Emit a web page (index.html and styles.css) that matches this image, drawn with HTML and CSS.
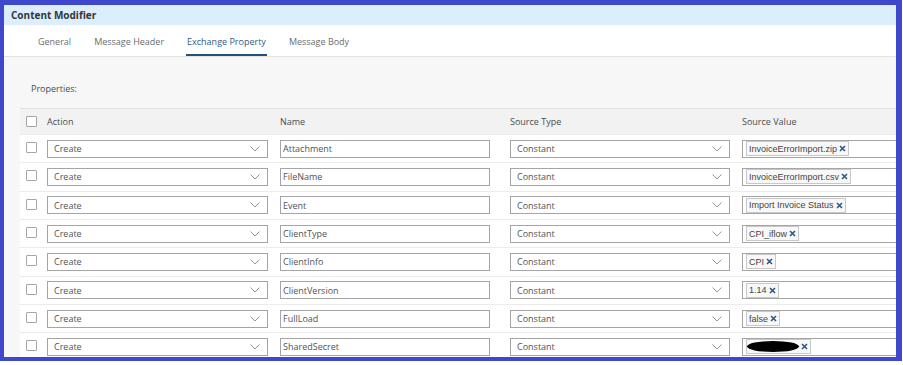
FILE: index.html
```html
<!DOCTYPE html>
<html lang="en">
  <head>
    <meta charset="UTF-8">
    <title>Content Modifier</title>
    <link rel="stylesheet" href="styles.css">
  </head>
  <body>
    <div class="frame">
      <div class="title-bar">Content Modifier</div>

      <div class="tabs">
        <span class="tab">General</span>
        <span class="tab">Message Header</span>
        <span class="tab tab-active">Exchange Property</span>
        <span class="tab">Message Body</span>
      </div>

      <div class="content">
        <div class="section-label">Properties:</div>

        <div class="table">
          <div class="row head-row">
            <div class="cell-check"><span class="checkbox"></span></div>
            <div>Action</div>
            <div>Name</div>
            <div>Source Type</div>
            <div>Source Value</div>
          </div>
          <!-- rows are generated below -->
          <div id="rows"></div>
        </div>
      </div>
    </div>

    <script>
      const properties = [
        { name: "Attachment", value: "InvoiceErrorImport.zip" },
        { name: "FileName", value: "InvoiceErrorImport.csv" },
        { name: "Event", value: "Import Invoice Status" },
        { name: "ClientType", value: "CPI_iflow" },
        { name: "ClientInfo", value: "CPI" },
        { name: "ClientVersion", value: "1.14" },
        { name: "FullLoad", value: "false" },
        { name: "SharedSecret", value: null },
      ];

      const chevron = `<svg class="chevron" width="10" height="6" viewBox="0 0 10 6"><polyline points="0.5,0.5 5,5 9.5,0.5" fill="none" stroke="#8899ab" stroke-width="1"/></svg>`;
      const cross = `<svg class="token-x" width="7" height="7" viewBox="0 0 7 7"><path d="M1 1 L6 6 M6 1 L1 6" stroke="#2c5785" stroke-width="1.6"/></svg>`;

      const rowsContainer = document.getElementById("rows");

      properties.forEach((prop) => {
        const row = document.createElement("div");
        row.className = "row body-row";

        const tokenText = prop.value === null
          ? `<span class="redacted"></span>`
          : prop.value;

        row.innerHTML = `
          <div class="cell-check"><span class="checkbox"></span></div>
          <div><div class="select select-action"><span>Create</span>${chevron}</div></div>
          <div><div class="text-input">${prop.name}</div></div>
          <div><div class="select select-type"><span>Constant</span>${chevron}</div></div>
          <div><div class="token-input"><span class="token">${tokenText}${cross}</span></div></div>
        `;
        rowsContainer.appendChild(row);
      });
    </script>
  </body>
</html>
```

FILE: styles.css
```css
body {
  margin: 0;
  background-color: #fff;
  font-family: "Open Sans", sans-serif;
  font-size: 9px;
  color: #32363a;
}

.frame {
  box-sizing: border-box;
  width: 902px;
  height: 361px;
  border-style: solid;
  border-color: #3f48cc;
  border-width: 5px 6px 4px 4px;
  background-color: #f7f7f7;
  overflow: hidden;
}

.title-bar {
  height: 20px;
  line-height: 20px;
  padding-left: 7px;
  background-color: #dcedfc;
  font-size: 10px;
  font-weight: 700;
  color: #32363a;
}

.tabs {
  display: flex;
  gap: 23px;
  height: 31px;
  padding-left: 34px;
  background-color: #fff;
  border-bottom: 1px solid #e3e3e3;
}

.tab {
  display: flex;
  align-items: center;
  box-sizing: border-box;
  height: 31px;
  padding-top: 1px;
  color: #6a6d70;
}

.tab-active {
  color: #2f5a87;
  border-bottom: 2px solid #254f7d;
  padding: 3px 1px 0;
  margin-left: -1px;
  margin-right: -1px;
}

.content {
  padding: 25px 0 0 16px;
}

.section-label {
  height: 26px;
  padding-left: 11px;
  color: #4a4d50;
}

.table {
  width: 100%;
}

.row {
  display: grid;
  grid-template-columns: 27px 233px 230px 232px 1fr;
  align-items: center;
  box-sizing: border-box;
}

.head-row {
  height: 26px;
  background-color: #f2f2f2;
  border-top: 1px solid #e2e2e2;
  color: #4a4d50;
}

.body-row {
  height: 28.33px;
  background-color: #fff;
  border-top: 1px solid #ececec;
}

.cell-check {
  padding-left: 6px;
}

.checkbox {
  display: block;
  box-sizing: border-box;
  width: 11px;
  height: 11px;
  border: 1px solid #a6a6a6;
  border-radius: 1px;
  background-color: #fff;
}

.body-row .checkbox {
  margin-top: -2px;
}

.select,
.text-input,
.token-input {
  box-sizing: border-box;
  height: 18px;
  display: flex;
  align-items: center;
  background-color: #fff;
  border: 1px solid #a5a5a5;
}

.select {
  justify-content: space-between;
  padding: 0 7px 0 6px;
  color: #515456;
}

.select-action {
  width: 221px;
}

.select-type {
  width: 220px;
}

.chevron {
  display: block;
}

.text-input {
  width: 210px;
  padding-left: 2px;
  color: #515456;
}

.token-input {
  width: 220px;
  padding-left: 3px;
}

.token {
  display: flex;
  align-items: center;
  gap: 2px;
  height: 13px;
  padding: 0 2px;
  border: 1px solid #c8c8c8;
  background-color: #f8f8f8;
  font-family: "Liberation Sans", Arial, sans-serif;
  font-size: 9px;
  color: #444;
}

.token-x {
  display: block;
}

.redacted {
  display: block;
  width: 52px;
  height: 11px;
  margin-left: -2px;
  border-radius: 50%;
  background-color: #000;
}
```
